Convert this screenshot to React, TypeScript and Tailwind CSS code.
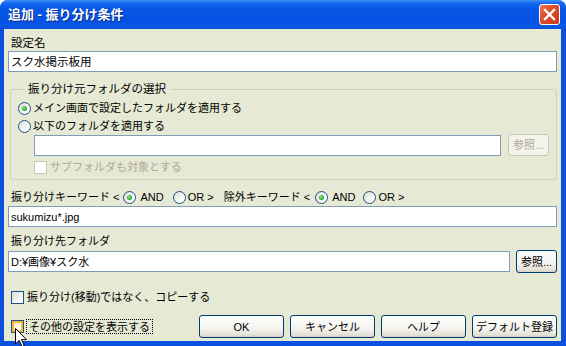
import React from "react";

const btn =
  "h-[23px] rounded-[3px] border border-[#003c74] bg-[linear-gradient(180deg,#ffffff_0%,#f4f3ee_60%,#e4e1d6_90%,#d6d0c5_100%)] flex items-center justify-center text-black";

function Radio({ checked }: { checked?: boolean }) {
  return (
    <span className="w-[13px] h-[13px] rounded-full border border-[#1c5180] bg-[linear-gradient(135deg,#dcdcd7_0%,#ffffff_80%)] flex items-center justify-center shrink-0">
      {checked && (
        <span className="w-[5px] h-[5px] rounded-full bg-[radial-gradient(circle_at_40%_40%,#8ee68e_0%,#21a121_70%,#1a7a1a_100%)]" />
      )}
    </span>
  );
}

function Check({ disabled, hot }: { disabled?: boolean; hot?: boolean }) {
  if (disabled)
    return <span className="w-[13px] h-[13px] border border-[#cac8bb] bg-white shrink-0" />;
  if (hot)
    return (
      <span className="w-[13px] h-[13px] border border-[#1c5180] bg-white shrink-0 flex">
        <span className="flex-1 border-2 border-[#f8b636] bg-[linear-gradient(135deg,#fdebc2,#ffffff)]" />
      </span>
    );
  return (
    <span className="w-[13px] h-[13px] border border-[#1c5180] bg-[linear-gradient(135deg,#dcdcd7_0%,#ffffff_85%)] shrink-0" />
  );
}

function Input({ value, className = "" }: { value?: string; className?: string }) {
  return (
    <div
      className={
        "h-[21px] border border-[#7f9db9] bg-white flex items-center pl-[2px] text-black " +
        className
      }
    >
      {value}
    </div>
  );
}

export default function App() {
  return (
    <div className="relative w-[566px] h-[346px] bg-white overflow-hidden">
      <div className="w-full h-full flex flex-col rounded-t-[8px] bg-[#0b50de] overflow-hidden">
        {/* Title bar */}
        <div className="h-[29px] shrink-0 flex items-center pl-[8px] pr-[6px] bg-[linear-gradient(180deg,#3d8ff8_0%,#1467ee_12%,#0756e6_30%,#0352e3_70%,#0a58e6_90%,#0b50d8_100%)]">
          <span className="text-white font-bold text-[13px] leading-[16px] font-['Liberation_Sans','Noto_Sans_CJK_JP',sans-serif] [text-shadow:1px_1px_0_#0a2a8a]">
            追加 - 振り分け条件
          </span>
          <div className="ml-auto w-[21px] h-[21px] rounded-[3px] border border-white bg-[linear-gradient(135deg,#ee7a5a_0%,#e0502d_35%,#c8391c_100%)] flex items-center justify-center">
            <svg width="13" height="13" viewBox="0 0 13 13">
              <path d="M2 2 L11 11 M11 2 L2 11" stroke="white" strokeWidth="2.4" strokeLinecap="square" />
            </svg>
          </div>
        </div>

        {/* Body */}
        <div className="flex-1 ml-[4px] mr-[5px] mb-[5px] bg-[#e6e9d4] flex flex-col px-[4px] pt-[7px] text-[11px] leading-[14px] text-black font-['Liberation_Sans','Noto_Sans_CJK_JP',sans-serif]">
          <div className="pl-[3px] h-[14px] text-[11.5px]">設定名</div>
          <Input value="スク水掲示板用" className="mt-[1px] text-[11.5px]" />

          <fieldset className="mt-[10px] ml-[2px] border border-[#d0d0bf] rounded-[3px] pl-[7px] pr-[7px] pb-[5px]">
            <legend className="ml-[6px] px-[4px] h-[14px] text-[11.5px]">振り分け元フォルダの選択</legend>
            <div className="mt-[4px] h-[16px] flex items-center gap-[2px]">
              <Radio checked />
              <span>メイン画面で設定したフォルダを適用する</span>
            </div>
            <div className="mt-[2px] h-[16px] flex items-center gap-[2px]">
              <Radio />
              <span>以下のフォルダを適用する</span>
            </div>
            <div className="flex items-center ml-[16px] gap-[7px] mt-[0px] h-[22px]">
              <Input className="flex-1 h-[20px]" />
              <div className="w-[41px] h-[22px] rounded-[3px] border border-[#c9c7ba] bg-[#f5f4ea] flex items-center justify-center text-[#aca899]">
                参照...
              </div>
            </div>
            <div className="ml-[16px] mt-[4px] h-[14px] flex items-center gap-[3px] text-[#aca899]">
              <Check disabled />
              <span>サブフォルダも対象とする</span>
            </div>
          </fieldset>

          <div className="mt-[10px] pl-[3px] h-[14px] flex items-center whitespace-pre">
            <span>振り分けキーワード &lt;</span>
            <span className="ml-[4px]"><Radio checked /></span>
            <span className="ml-[4px]">AND</span>
            <span className="ml-[9px]"><Radio /></span>
            <span className="ml-[2px]">OR &gt;</span>
            <span className="ml-[10px]">除外キーワード &lt;</span>
            <span className="ml-[5px]"><Radio checked /></span>
            <span className="ml-[4px]">AND</span>
            <span className="ml-[8px]"><Radio /></span>
            <span className="ml-[2px]">OR &gt;</span>
          </div>
          <Input value="sukumizu*.jpg" className="mt-[2px]" />

          <div className="mt-[7px] pl-[3px] h-[14px]">振り分け先フォルダ</div>
          <div className="mt-[2px] flex items-center gap-[6px]">
            <Input value="D:¥画像¥スク水" className="flex-1" />
            <div className={btn + " w-[41px] h-[21px]"}>参照...</div>
          </div>

          <div className="mt-[17px] pl-[3px] h-[14px] flex items-center gap-[3px]">
            <Check />
            <span>振り分け(移動)ではなく、コピーする</span>
          </div>

          <div className="mt-[11px] flex items-center">
            <span className="ml-[3px]"><Check hot /></span>
            <span className="ml-[2px] h-[15px] px-[2px] border border-dotted border-black flex items-center">
              その他の設定を表示する
            </span>
            <div className="ml-auto flex gap-[6px]">
              <div className={btn + " w-[85px]"}>OK</div>
              <div className={btn + " w-[85px]"}>キャンセル</div>
              <div className={btn + " w-[85px]"}>ヘルプ</div>
              <div className={btn + " w-[85px]"}>デフォルト登録</div>
            </div>
          </div>
        </div>
      </div>

      {/* mouse cursor */}
      <svg className="absolute left-[15px] top-[328px]" width="13" height="20" viewBox="0 0 13 20">
        <path d="M0.5 0.5 L0.5 16 L4.2 12.4 L7 18.6 L9.2 17.6 L6.5 11.6 L11.5 11.6 Z" fill="white" stroke="black" strokeWidth="1" />
      </svg>
    </div>
  );
}
